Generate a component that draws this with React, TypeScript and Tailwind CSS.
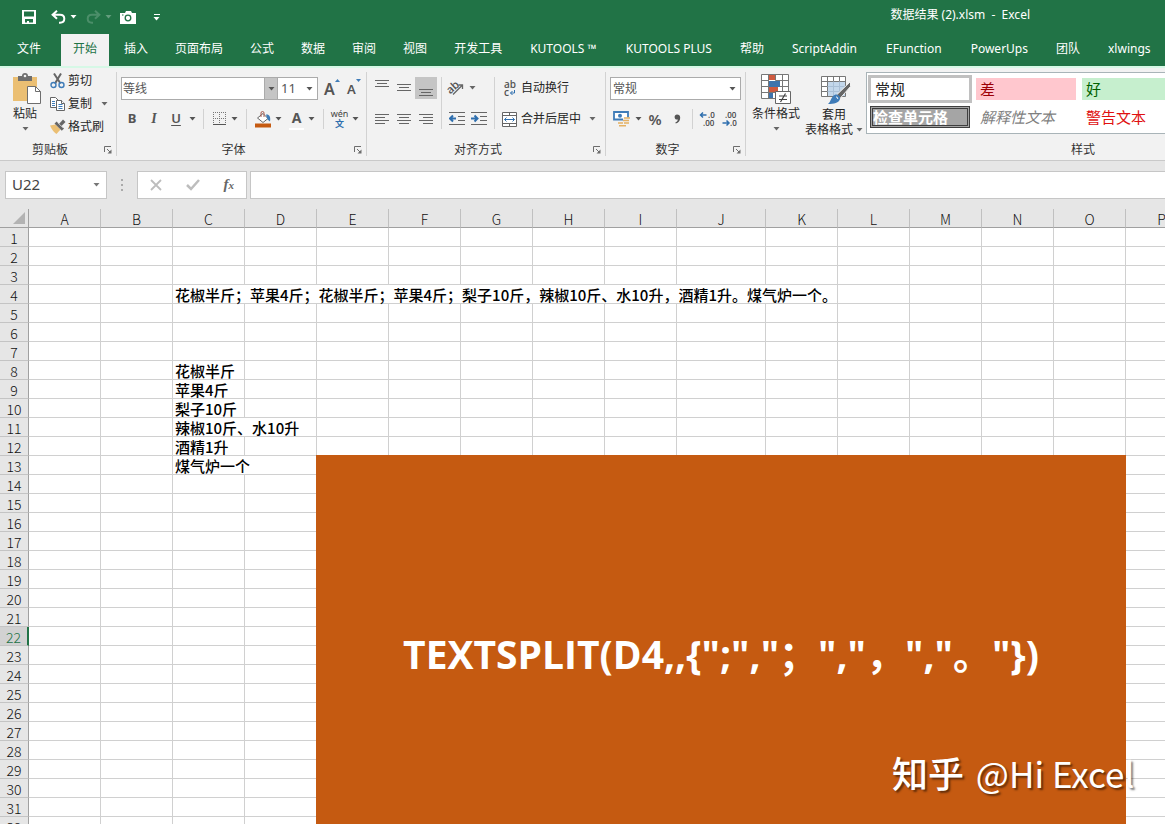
import React from "react";

const UI = "font-['Noto_Sans','Noto_Sans_CJK_SC',sans-serif]";

function Caret({ dim = false }: { dim?: boolean }) {
  return (
    <svg width="7" height="4" viewBox="0 0 7 4" className="shrink-0" aria-hidden="true">
      <path d="M0.5 0h6L3.5 3.5z" fill="currentColor" opacity={dim ? 0.3 : 1} />
    </svg>
  );
}

function Launcher({ label }: { label: string }) {
  return (
    <button type="button" aria-label={label} className="ml-1 mr-1 flex size-2 items-center justify-center">
      <svg width="8" height="8" viewBox="0 0 8 8" fill="none" stroke="#6d6d6d" aria-hidden="true">
        <path d="M0.5 6V0.5H7M3 3l3 3" />
        <path d="M7.5 3.5v4h-4z" fill="#6d6d6d" stroke="none" />
      </svg>
    </button>
  );
}

function Group({
  label,
  width,
  launcher = true,
  children,
}: {
  label: string;
  width: string;
  launcher?: boolean;
  children: React.ReactNode;
}) {
  return (
    <section aria-label={label} className={`flex shrink-0 flex-col ${width}`}>
      <div className="flex h-[72px] flex-1">{children}</div>
      <div className="flex h-5 items-center">
        <span className="flex-1 text-center text-xs text-[#333]">{label}</span>
        {launcher ? <Launcher label={`${label}设置`} /> : null}
      </div>
    </section>
  );
}

function GroupLine() {
  return <div className="my-1 w-px shrink-0 bg-[#d2d2d2]" />;
}

function Sep() {
  return <div className="h-5 w-px shrink-0 bg-[#d2d2d2]" />;
}

function Tool({
  label,
  width = "w-[22px]",
  active = false,
  children,
}: {
  label: string;
  width?: string;
  active?: boolean;
  children: React.ReactNode;
}) {
  return (
    <button
      type="button"
      aria-label={label}
      className={`flex h-[22px] shrink-0 items-center justify-center gap-1 ${width} ${active ? "bg-[#c5c5c5]" : ""}`}
    >
      {children}
    </button>
  );
}

function Lines({ rows }: { rows: [number, number, number][] }) {
  return (
    <svg width="14" height="16" viewBox="0 0 14 16" stroke="#666" aria-hidden="true">
      {rows.map(([x1, x2, y]) => (
        <path key={y} d={`M${x1} ${y + 0.5}H${x2}`} />
      ))}
    </svg>
  );
}

function SaveIcon() {
  return (
    <svg width="14" height="14" viewBox="0 0 14 14" aria-hidden="true">
      <path fillRule="evenodd" fill="#fff" d="M0 0h14v14H0zM2 1.5v5h10v-5zM3 9v3.5h2V11h2v1.5h4V9z" />
    </svg>
  );
}

function UndoIcon({ flip = false }: { flip?: boolean }) {
  return (
    <svg width="15" height="14" viewBox="0 0 15 14" fill="none" stroke={flip ? "#4b8e69" : "#fff"} strokeWidth="2" aria-hidden="true">
      <g transform={flip ? "translate(15 0) scale(-1 1)" : undefined}>
        <path d="M6 0.8L1.6 4.8L6 8.8M2 4.8H9c2.600 0 4.300 1.600 4.300 4S11.600 12.700 9 12.700H8" />
      </g>
    </svg>
  );
}

function CameraIcon() {
  return (
    <svg width="16" height="13" viewBox="0 0 16 13" aria-hidden="true">
      <path fill="#fff" d="M0 2h5l1-2h5l1 2h4v11H0z" />
      <circle cx="8" cy="7" r="2.800" fill="#fff" stroke="#217346" strokeWidth="1.300" />
      <path d="M2 4h1.500" stroke="#217346" />
    </svg>
  );
}

function PasteIcon() {
  return (
    <svg width="30" height="32" viewBox="0 0 30 32" className="ml-[3px]" aria-hidden="true">
      <path d="M1 4h24v24H1z" fill="#ebbf73" />
      <path d="M6 8V3h4a3 3 0 0 1 6 0h4v5z" fill="#6e6e6e" />
      <circle cx="13" cy="3" r="1.300" fill="#f2f2f2" />
      <path d="M15.500 13.500h8l5 5v12h-13z" fill="#fff" stroke="#6e6e6e" />
      <path d="M23.500 13.500v5h5" fill="none" stroke="#6e6e6e" />
    </svg>
  );
}

function CutIcon() {
  return (
    <svg width="16" height="16" viewBox="0 0 16 16" fill="none" aria-hidden="true">
      <path d="M4 0.500L10.500 10.500M11 0.500L5 10.500" stroke="#666" strokeWidth="2" />
      <circle cx="3.500" cy="12" r="2.500" stroke="#3f7cb8" strokeWidth="1.400" />
      <circle cx="11.500" cy="12" r="2.500" stroke="#3f7cb8" strokeWidth="1.400" />
    </svg>
  );
}

function CopyIcon() {
  return (
    <svg width="16" height="16" viewBox="0 0 16 16" fill="#fff" stroke="#666" aria-hidden="true">
      <path d="M0.500 1.500h5l3 3v7h-8z" />
      <path d="M2 5.500h3M2 7.500h3M2 9.500h3" stroke="#3f7cb8" />
      <path d="M6.500 4.500h5l3 3v7h-8z" />
      <path d="M11.500 4.500v3h3" />
      <path d="M8.500 8.500h4M8.500 10.500h4M8.500 12.500h4" stroke="#3f7cb8" />
    </svg>
  );
}

function BrushIcon() {
  return (
    <svg width="16" height="16" viewBox="0 0 16 16" aria-hidden="true">
      <path d="M0 6.500l5.500-1 5 5-4 4.500c-2-1-4.700-4.500-6.500-8.500z" fill="#ebbf73" />
      <path d="M4.500 4.500l2.200-2 7.300 7-2.200 2.200z" fill="#666" />
      <path d="M9 5l4-4.500 2.500 2.500L11.500 7z" fill="#666" />
      <path d="M7.500 3.500l5.500 5.300" stroke="#f2f2f2" strokeWidth="0.600" />
    </svg>
  );
}

function BorderIcon() {
  return (
    <svg width="14" height="14" viewBox="0 0 14 14" fill="none" stroke="#777" aria-hidden="true">
      <path strokeDasharray="1 1" d="M0 0.500h13M0 6.500h13M0.500 0v13M6.500 0v13M12.500 0v13" />
      <path d="M0 12.500h13" stroke="#555" />
    </svg>
  );
}

function FillIcon() {
  return (
    <svg width="16" height="17" viewBox="0 0 16 17" aria-hidden="true">
      <path d="M0 12.500h16v4H0z" fill="#c55a11" />
      <path d="M2.500 7L8 2.500 13 7.500l-5 4z" fill="#fff" stroke="#666" />
      <path d="M6 6V2a1.500 1.500 0 0 1 3 0V6" fill="none" stroke="#a75b50" />
      <path d="M11 3.500c3-.5 5 2 4 7-1-1-2.500-1.500-3-3.500z" fill="#3f7cb8" />
    </svg>
  );
}

function OrientationIcon() {
  return (
    <svg width="18" height="16" viewBox="0 0 18 16" className="overflow-visible" aria-hidden="true">
      <text x="0" y="12" fontSize="11" fontWeight="600" fill="#555" transform="rotate(-42 5 9)" fontFamily="Open Sans">ab</text>
      <path d="M6 14.500L15.500 5M11.500 5h4v4" fill="none" stroke="#666" strokeWidth="1.300" />
    </svg>
  );
}

function IndentIcon({ right = false }: { right?: boolean }) {
  return (
    <svg width="16" height="14" viewBox="0 0 16 14" fill="none" stroke="#666" aria-hidden="true">
      <path d="M0 0.500h16M9 4.500h7M9 8.500h7M0 12.500h16" />
      <path d={right ? "M0 6.500h6M3.500 3.500l3 3-3 3" : "M1 6.500h6M4 3.500l-3 3 3 3"} stroke="#2f6fae" strokeWidth="2" />
    </svg>
  );
}

function WrapIcon() {
  return (
    <svg width="15" height="18" viewBox="0 0 15 18" className="overflow-visible" fill="#555" fontFamily="Open Sans" fontWeight="600" fontSize="10" aria-hidden="true">
      <text x="2" y="9">ab</text>
      <text x="2" y="17">c</text>
      <path d="M12.500 11v3H8.500M10.500 12l-2 2 2 2" fill="none" stroke="#2f6fae" />
    </svg>
  );
}

function MergeIcon() {
  return (
    <svg width="15" height="15" viewBox="0 0 15 15" fill="none" stroke="#666" aria-hidden="true">
      <path fill="#fff" d="M0.500 0.500h14v14h-14z" />
      <path d="M0.500 3.500h14M0.500 11.500h14M7.500 0.500v3M7.500 11.500v3" />
      <path d="M2.500 7.500h10M4.500 5.500l-2 2 2 2M10.500 5.500l2 2-2 2" stroke="#2f6fae" />
    </svg>
  );
}

function MoneyIcon() {
  return (
    <svg width="18" height="16" viewBox="0 0 18 16" aria-hidden="true">
      <path d="M1 1h14v7.500H1z" fill="#fff" stroke="#3f7cb8" strokeWidth="1.800" />
      <circle cx="7" cy="4.700" r="2" fill="#3f7cb8" />
      <path d="M10 6.500h8v9H5v-5h5z" fill="#f2f2f2" />
      <path d="M11 7h6M10 9.500h6M11 12h5M5 12h5M6 14.800h7" stroke="#e5b163" strokeWidth="1.600" />
    </svg>
  );
}

function CommaIcon() {
  return (
    <svg width="7" height="10" viewBox="0 0 7 10" aria-hidden="true">
      <path d="M3 0.500c2 0 3.200 1.200 3.200 3.200C6.200 6.500 4.500 8.700 1.800 9.500L1.300 8.500C2.900 7.800 3.700 6.800 3.800 5.500 2 6 0.600 4.800 0.600 3 0.600 1.500 1.600 0.500 3 0.500z" fill="#555" />
    </svg>
  );
}

function DecimalIcon({ add = false }: { add?: boolean }) {
  return (
    <svg width="16" height="16" viewBox="0 0 16 16" className="overflow-visible" fill="#444" fontFamily="Open Sans" fontSize="8" fontWeight="600" aria-hidden="true">
      <text x={add ? 8 : 3} y="7">{add ? ".0" : ".00"}</text>
      <text x={add ? 3 : 8} y="15">{add ? ".00" : ".0"}</text>
      <path
        d={add ? "M0.500 4h6M3 1.500L0.500 4 3 6.500" : "M0.500 12h6M4.500 9.500L7 12l-2.500 2.500"}
        fill="none"
        stroke="#2f6fae"
        strokeWidth="1.500"
      />
    </svg>
  );
}

function ConditionalIcon() {
  return (
    <svg width="30" height="31" viewBox="0 0 30 31" aria-hidden="true">
      <path d="M0.500 0.500h27v24h-27z" fill="#fff" />
      <path d="M8 1h6v5H8zM8 13h9v6H8z" fill="#cf5a3f" />
      <path d="M8 7h11v6H8zM8 19h4v6H8z" fill="#3f74ad" />
      <path d="M0.500 0.500h27v24h-27zM0.500 6.500h7M14.500 6.500h13M0.500 12.500h7M19 12.500h8.500M0.500 18.500h27M7.500 0.500v24M14.500 0.500v6M21.500 0.500v24" fill="none" stroke="#777" />
      <path d="M14.500 17.500h15v12h-15z" fill="#fff" stroke="#666" />
      <path d="M18 22h8M18 25.500h8M24.500 19.500l-5 8.500" stroke="#444" strokeWidth="1.200" />
    </svg>
  );
}

function TableStyleIcon() {
  return (
    <svg width="30" height="29" viewBox="0 0 30 29" className="ml-[3px]" aria-hidden="true">
      <path d="M0.500 0.500h24v20h-24z" fill="#fff" />
      <path d="M6.500 5.500h18v15h-18z" fill="#c3d7eb" />
      <path d="M0.500 0.500h24v20h-24zM0.500 5.500h24M0.500 10.500h6M0.500 15.500h6M6.500 0.500v20M12.500 0.500v5M18.500 0.500v5" fill="none" stroke="#777" />
      <path d="M12.500 5.500v15M18.500 5.500v15M6.500 10.500h18M6.500 15.500h18" stroke="#a9bfd6" />
      <path d="M29.500 5.500v5L19 22.500l-4-3z" fill="#666" stroke="#f2f2f2" />
      <path d="M14.500 18.500c3 0 5 2 4.500 4.500-1 4-6 5-12 5 3-2 3-8 7.500-9.500z" fill="#3f7cb8" />
      <path d="M15 21c1.500 0 2 1 1.500 2" stroke="#fff" fill="none" />
    </svg>
  );
}

const tabs = [
  "开始", "插入", "页面布局", "公式", "数据", "审阅", "视图", "开发工具",
  "KUTOOLS ™", "KUTOOLS PLUS", "帮助", "ScriptAddin", "EFunction", "PowerUps", "团队", "xlwings",
];

function tabPadding(tab: string) {
  return /^[A-Za-z]/.test(tab) ? "px-[13px]" : "px-3";
}

function TitleBar() {
  return (
    <header className="flex h-[34px] shrink-0 items-center justify-between bg-[#217346] pl-[22px] text-white">
      <div className="flex items-center">
        <button type="button" aria-label="保存"><SaveIcon /></button>
        <button type="button" aria-label="撤消" className="ml-[15px] flex items-center gap-1"><UndoIcon /><Caret /></button>
        <button type="button" aria-label="恢复" className="ml-[9px] flex items-center gap-1"><UndoIcon flip /><Caret dim /></button>
        <button type="button" aria-label="照相机" className="ml-2"><CameraIcon /></button>
        <button type="button" aria-label="自定义快速访问工具栏" className="ml-[17px] flex flex-col items-center gap-[2px]">
          <span className="h-px w-[6px] bg-white" />
          <Caret />
        </button>
      </div>
      <h1 className="mr-[135px] whitespace-pre pb-1 text-xs">数据结果 (2).xlsm  -  Excel</h1>
    </header>
  );
}

function TabBar() {
  return (
    <nav className="flex h-8 shrink-0 overflow-hidden bg-[#217346] pl-[5px] text-xs text-white">
      <button type="button" className="mr-2 shrink-0 px-3 pb-[2px]">文件</button>
      <div className="flex gap-[3px]">
        {tabs.map((tab, i) => (
          <button
            key={tab}
            type="button"
            className={`shrink-0 whitespace-nowrap pb-[2px] ${tabPadding(tab)} ${i === 0 ? "bg-[#f2f2f2] text-[#217346]" : ""}`}
          >
            {tab}
          </button>
        ))}
      </div>
    </nav>
  );
}

function ClipboardGroup() {
  return (
    <Group label="剪贴板" width="w-[116px]">
      <button type="button" className="flex w-[50px] flex-col items-center pt-[5px] text-xs leading-[18px]">
        <PasteIcon />
        粘贴
        <span className="mt-1 text-[#666]"><Caret /></span>
      </button>
      <div className="flex flex-col pt-[1px] text-xs">
        <button type="button" className="flex h-[23px] items-center gap-[2px]"><CutIcon />剪切</button>
        <button type="button" className="flex h-[23px] items-center gap-[2px]">
          <CopyIcon />复制<span className="ml-[7px] text-[#666]"><Caret /></span>
        </button>
        <button type="button" className="flex h-[23px] items-center gap-[2px]"><BrushIcon />格式刷</button>
      </div>
    </Group>
  );
}

function FontGroup() {
  return (
    <Group label="字体" width="w-[249px]">
      <div className="flex flex-col gap-2 pl-1 pt-[9px] text-[#555]">
        <div className="flex items-center">
          <div className="flex h-[23px] w-[157px] border border-[#ababab] bg-white">
            <input aria-label="字体名称" defaultValue="等线" className="w-full min-w-0 flex-1 px-[1px] text-xs text-[#555]" />
            <button type="button" aria-label="字体列表" className="flex w-[13px] shrink-0 items-center justify-center border-l border-[#ababab] bg-[#c5c5c5]"><Caret /></button>
          </div>
          <div className="relative flex h-[23px] w-10 items-center border-y border-r border-[#ababab] bg-white">
            <select aria-label="字号" className="w-full appearance-none pl-[3px] text-[13px]"><option>11</option></select>
            <span className="pointer-events-none absolute right-1"><Caret /></span>
          </div>
          <button type="button" aria-label="增大字号" className="ml-[6px] flex w-[15px] items-start text-base font-semibold leading-5">
            A<svg width="5" height="3" className="shrink-0" aria-hidden="true"><path d="M0 3h5L2.500 0z" fill="#3f7cb8" /></svg>
          </button>
          <button type="button" aria-label="减小字号" className="ml-[8px] flex w-[13px] items-start text-[13px] font-semibold leading-5">
            A<svg width="5" height="3" className="shrink-0" aria-hidden="true"><path d="M0 0h5L2.500 3z" fill="#3f7cb8" /></svg>
          </button>
        </div>
        <div className="flex items-center">
          <Tool label="加粗"><b className="text-[13px]">B</b></Tool>
          <Tool label="倾斜"><i className="font-['Liberation_Serif',serif] text-sm font-bold">I</i></Tool>
          <Tool label="下划线"><span className="text-[13px] font-semibold underline underline-offset-2">U</span></Tool>
          <Tool label="下划线选项" width="w-[11px]"><Caret /></Tool>
          <span className="w-[5px]" />
          <Sep />
          <span className="w-1" />
          <Tool label="边框" width="w-[34px]"><BorderIcon /><Caret /></Tool>
          <span className="w-1" />
          <Sep />
          <span className="w-1" />
          <Tool label="填充颜色" width="w-[34px]"><FillIcon /><Caret /></Tool>
          <Tool label="字体颜色" width="w-[34px]">
            <span className="border-b-2 border-white px-[3px] text-sm font-bold leading-5">A</span><Caret />
          </Tool>
          <span className="w-1" />
          <Sep />
          <span className="w-1" />
          <Tool label="拼音指南" width="w-[34px]">
            <span className="flex flex-col items-center text-[9px] leading-[10px] text-[#444]">
              wén<span className="font-bold text-[#2f6fae]">文</span>
            </span>
            <Caret />
          </Tool>
        </div>
      </div>
    </Group>
  );
}

function AlignGroup() {
  return (
    <Group label="对齐方式" width="w-[238px]">
      <div className="flex pl-1 pt-[9px] text-[#666]">
        <div className="flex flex-col gap-[9px]">
          <div className="flex">
            <Tool label="顶端对齐"><Lines rows={[[0, 14, 0], [2, 12, 3], [0, 14, 6]]} /></Tool>
            <Tool label="垂直居中"><Lines rows={[[0, 14, 4], [2, 12, 7], [0, 14, 10]]} /></Tool>
            <Tool label="底端对齐" active><Lines rows={[[0, 14, 9], [2, 12, 12], [0, 14, 15]]} /></Tool>
          </div>
          <div className="flex">
            <Tool label="左对齐"><Lines rows={[[0, 14, 3], [0, 10, 6], [0, 14, 9], [0, 10, 12]]} /></Tool>
            <Tool label="居中"><Lines rows={[[0, 14, 3], [2, 12, 6], [0, 14, 9], [2, 12, 12]]} /></Tool>
            <Tool label="右对齐"><Lines rows={[[0, 14, 3], [4, 14, 6], [0, 14, 9], [4, 14, 12]]} /></Tool>
          </div>
        </div>
        <div className="ml-[4px] h-[52px] w-px bg-[#d2d2d2]" />
        <div className="ml-1 flex w-11 flex-col gap-[9px]">
          <Tool label="方向" width="w-[30px]"><OrientationIcon /><Caret /></Tool>
          <div className="flex">
            <Tool label="减少缩进量"><IndentIcon /></Tool>
            <Tool label="增加缩进量"><IndentIcon right /></Tool>
          </div>
        </div>
        <div className="ml-1 h-[52px] w-px bg-[#d2d2d2]" />
        <div className="ml-[7px] flex flex-col gap-[9px] text-xs text-[#262626]">
          <button type="button" className="flex h-[22px] items-center gap-1"><WrapIcon />自动换行</button>
          <button type="button" className="flex h-[22px] items-center gap-1">
            <MergeIcon />合并后居中<span className="ml-1 text-[#666]"><Caret /></span>
          </button>
        </div>
      </div>
    </Group>
  );
}

function NumberGroup() {
  return (
    <Group label="数字" width="w-[139px]">
      <div className="flex flex-1 flex-col gap-2 px-1 pt-[9px] text-[#555]">
        <div className="relative flex h-[23px] items-center border border-[#ababab] bg-white">
          <select aria-label="数字格式" className="w-full appearance-none pl-[2px] text-xs"><option>常规</option></select>
          <span className="pointer-events-none absolute right-1"><Caret /></span>
        </div>
        <div className="flex items-center">
          <Tool label="会计数字格式" width="w-[34px]"><MoneyIcon /><Caret /></Tool>
          <Tool label="百分比样式"><span className="text-[15px] font-semibold">%</span></Tool>
          <Tool label="千位分隔样式"><CommaIcon /></Tool>
          <span className="w-1" />
          <Sep />
          <span className="w-1" />
          <Tool label="增加小数位数"><DecimalIcon add /></Tool>
          <Tool label="减少小数位数"><DecimalIcon /></Tool>
        </div>
      </div>
    </Group>
  );
}

function StylesGroup() {
  return (
    <Group label="样式" width="w-[674px]" launcher={false}>
      <button type="button" className="flex w-[60px] flex-col items-center pt-[6px] text-xs leading-[18px]">
        <ConditionalIcon />
        条件格式
        <span className="mt-1 text-[#666]"><Caret /></span>
      </button>
      <button type="button" className="flex w-14 flex-col items-center pt-2 text-xs leading-[15px]">
        <TableStyleIcon />
        <span className="mt-[2px]">套用</span>
        <span className="flex items-center gap-[3px] whitespace-nowrap">表格格式<span className="text-[#666]"><Caret /></span></span>
      </button>
      <div className="ml-1 mt-1 grid h-[62px] flex-1 auto-rows-min grid-cols-[104px_104px_104px] gap-x-[2px] border border-[#a9b4b8] bg-white pl-px pt-[2px] text-[15px] leading-[22px]">
        <button type="button" className="h-7 border-[3px] border-[#c0c0c0] px-1 text-left leading-5 text-[#222]">常规</button>
        <button type="button" className="mx-[2px] my-[3px] h-[22px] bg-[#ffc7ce] px-1 text-left leading-5 text-[#9c0006]">差</button>
        <button type="button" className="mx-[2px] my-[3px] h-[22px] bg-[#c6efce] px-1 text-left leading-5 text-[#006100]">好</button>
        <button type="button" className="mx-[2px] my-[3px] h-[22px] border-[3px] border-double border-[#3f3f3f] bg-[#a5a5a5] text-left font-bold leading-4 text-white">检查单元格</button>
        <button type="button" className="mx-[2px] my-[3px] h-[22px] px-1 text-left italic leading-5 text-[#7f7f7f]">解释性文本</button>
        <button type="button" className="mx-[2px] my-[3px] h-[22px] px-1 text-left leading-5 text-[#e01010]">警告文本</button>
      </div>
    </Group>
  );
}

function FormulaBar() {
  return (
    <div className="flex h-[49px] shrink-0 items-center border-t border-[#c9c9c9] bg-[#e6e6e6] pb-px pl-[5px]">
      <div className="flex h-7 w-[102px] items-center justify-between border border-[#c6c6c6] bg-white pr-[6px] text-[#777]">
        <input aria-label="名称框" defaultValue="U22" className="w-16 pl-[6px] text-[15px] text-[#444]" />
        <button type="button" aria-label="名称列表"><Caret /></button>
      </div>
      <div className="ml-3.5 flex flex-col gap-[3px]">
        <span className="size-[2px] bg-[#aaa]" />
        <span className="size-[2px] bg-[#aaa]" />
        <span className="size-[2px] bg-[#aaa]" />
      </div>
      <div className="ml-3.5 flex h-7 w-[110px] items-center justify-around border border-[#c6c6c6] bg-white">
        <button type="button" aria-label="取消">
          <svg width="12" height="12" viewBox="0 0 12 12" stroke="#bdbdbd" strokeWidth="1.800" aria-hidden="true"><path d="M1 1l10 10M11 1L1 11" /></svg>
        </button>
        <button type="button" aria-label="输入">
          <svg width="14" height="12" viewBox="0 0 14 12" fill="none" stroke="#bdbdbd" strokeWidth="2.500" aria-hidden="true"><path d="M1 6l4 4 8-9" /></svg>
        </button>
        <button type="button" aria-label="插入函数" className="font-['Liberation_Serif',serif] text-[15px] font-bold italic leading-5 text-[#666]">
          f<span className="text-[11px]">x</span>
        </button>
      </div>
      <input aria-label="编辑栏" className="ml-[3px] h-7 min-w-0 flex-1 border border-r-0 border-[#c6c6c6] bg-white px-2" />
    </div>
  );
}

const columns = ["A", "B", "C", "D", "E", "F", "G", "H", "I", "J", "K", "L", "M", "N", "O", "P"];

const cellText: Record<number, { text: string; span: number }> = {
  4: {
    text: "花椒半斤；苹果4斤；花椒半斤；苹果4斤；梨子10斤，辣椒10斤、水10升，酒精1升。煤气炉一个。",
    span: 9,
  },
  8: { text: "花椒半斤", span: 1 },
  9: { text: "苹果4斤", span: 1 },
  10: { text: "梨子10斤", span: 1 },
  11: { text: "辣椒10斤、水10升", span: 2 },
  12: { text: "酒精1升", span: 1 },
  13: { text: "煤气炉一个", span: 2 },
};

function Row({ n }: { n: number }) {
  const entry = cellText[n];
  const selected = n === 22;
  const cells: React.ReactNode[] = [];
  for (let c = 0; c < columns.length; c++) {
    const span = entry && c === 2 ? entry.span : 1;
    cells.push(
      <td key={c} colSpan={span} className="h-[19px] whitespace-nowrap border-b border-r border-[#d0d0d0] pl-[2px] pt-[2px] leading-4">
        {entry && c === 2 ? entry.text : null}
      </td>
    );
    c += span - 1;
  }
  return (
    <tr>
      <th
        scope="row"
        className={`h-[19px] border-b border-b-[#c4c4c4] pt-[2px] text-center text-sm font-light leading-4 ${
          selected ? "border-r-2 border-r-[#217346] bg-[#d2d2d2] text-[#217346]" : "border-r border-r-[#a0a0a0] bg-[#e6e6e6] text-[#111]"
        }`}
      >
        {n}
      </th>
      {cells}
    </tr>
  );
}

function Sheet() {
  return (
    <main className="relative flex-1 overflow-hidden bg-white font-['Noto_Sans_CJK_SC',sans-serif]">
      <table className="w-[1198px] table-fixed border-separate border-spacing-0 text-[15px] font-medium text-black">
        <colgroup>
          <col className="w-[29px]" />
          {columns.map((c) => (
            <col key={c} className={c === "J" ? "w-[89px]" : "w-[72px]"} />
          ))}
        </colgroup>
        <thead>
          <tr>
            <td className="h-[19px] border-b border-r border-[#a0a0a0] bg-[#e6e6e6]">
              <svg width="12" height="12" viewBox="0 0 12 12" className="ml-auto mr-[3px]" aria-hidden="true"><path d="M12 0v12H0z" fill="#b3b3b3" /></svg>
            </td>
            {columns.map((c) => (
              <th key={c} scope="col" className="h-[19px] border-b border-r border-b-[#a0a0a0] border-r-[#c0c0c0] bg-[#e6e6e6] pt-[2px] text-center text-sm font-light leading-4 text-[#111]">
                {c}
              </th>
            ))}
          </tr>
        </thead>
        <tbody>
          {Array.from({ length: 32 }, (_, i) => (
            <Row key={i} n={i + 1} />
          ))}
        </tbody>
      </table>
      <div className="absolute left-[316px] top-[246px] flex h-[398px] w-[810px] items-center justify-center bg-[#c55a11]">
        <p className="whitespace-nowrap font-['Open_Sans','Noto_Sans_CJK_SC',sans-serif] text-[39px] font-bold leading-[52px] text-white">
          {'TEXTSPLIT(D4,,{";","；","，","。"})'}
        </p>
      </div>
      <p className="absolute left-[892px] top-[538px] whitespace-nowrap text-[35px] leading-[52px] text-white [text-shadow:2px_2px_2px_rgba(0,0,0,0.5)]">
        <span className="mr-1 text-4xl font-medium">知乎</span> @Hi Excel
      </p>
    </main>
  );
}

export default function App() {
  return (
    <div className={`flex h-screen flex-col overflow-hidden text-[#262626] ${UI}`}>
      <TitleBar />
      <TabBar />
      <div className="flex h-[94px] shrink-0 overflow-hidden border-t-2 border-[#d6f8e6] bg-[#f2f2f2]">
        <ClipboardGroup />
        <GroupLine />
        <FontGroup />
        <GroupLine />
        <AlignGroup />
        <GroupLine />
        <NumberGroup />
        <GroupLine />
        <StylesGroup />
      </div>
      <FormulaBar />
      <Sheet />
    </div>
  );
}
